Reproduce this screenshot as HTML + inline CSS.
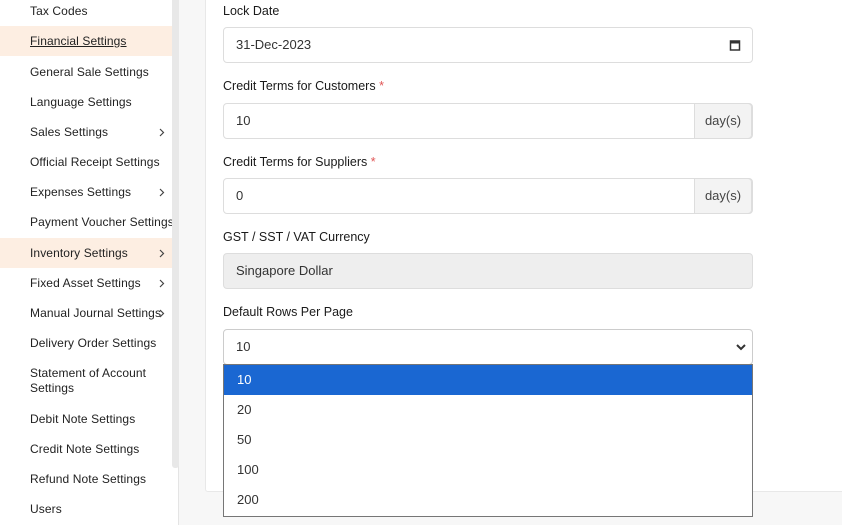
<!DOCTYPE html>
<html><head><style>
*{box-sizing:border-box;margin:0;padding:0}
body{width:842px;height:525px;overflow:hidden;background:#f7f7f7;font-family:"Liberation Sans",sans-serif;color:#222;position:relative}
.side{position:absolute;left:0;top:0;width:179px;height:525px;background:#fff;border-right:1px solid #e4e4e4}
.sb{position:absolute;left:172px;top:0;width:7px;height:468px;background:#e8e8e8;border-radius:0 0 3px 3px}
.it{position:absolute;left:0;width:172px;height:30px;font-size:12px;padding-left:30px;line-height:30px;color:#222;letter-spacing:0.1px;white-space:nowrap}
.it.h{background:#fdeee2;width:179px}
.it svg{position:absolute;left:159px;top:11px}
.card{position:absolute;left:205px;top:-5px;width:640px;height:497px;background:#fff;border:1px solid #e8e8e8;border-radius:3px}
.lbl{position:absolute;left:223px;font-size:12.5px;color:#1a1a1a}
.lbl b{color:#e05555;font-weight:normal}
.inp{position:absolute;left:223px;width:530px;height:36px;border:1px solid #ddd;border-radius:4px;background:#fff;font-size:13px;padding-left:12px;line-height:34px;color:#333}
.add{position:absolute;right:0;top:-1px;width:58px;height:36px;background:#f3f3f3;border:1px solid #ddd;border-radius:0 4px 4px 0;text-align:center;line-height:34px;font-size:13px;color:#444}
.dd{position:absolute;left:223px;top:364px;width:530px;height:153px;border:1px solid #767676;background:#fff;font-size:13px}
.dd div{height:30px;line-height:30px;padding-left:13px;color:#333}
.dd .sel{background:#1a67d2;color:#fff}
</style></head><body>
<div class="side">
<div class="it" style="top:-4px">Tax Codes</div>
<div class="it h" style="top:26px"><u>Financial Settings</u></div>
<div class="it" style="top:57px">General Sale Settings</div>
<div class="it" style="top:87px">Language Settings</div>
<div class="it" style="top:117px">Sales Settings<svg width="6" height="9" viewBox="0 0 6 9"><path d="M1 1l3.5 3.5L1 8" fill="none" stroke="#444" stroke-width="1.2"/></svg></div>
<div class="it" style="top:147px">Official Receipt Settings</div>
<div class="it" style="top:177px">Expenses Settings<svg width="6" height="9" viewBox="0 0 6 9"><path d="M1 1l3.5 3.5L1 8" fill="none" stroke="#444" stroke-width="1.2"/></svg></div>
<div class="it" style="top:207px">Payment Voucher Settings</div>
<div class="it h" style="top:238px">Inventory Settings<svg width="6" height="9" viewBox="0 0 6 9"><path d="M1 1l3.5 3.5L1 8" fill="none" stroke="#444" stroke-width="1.2"/></svg></div>
<div class="it" style="top:268px">Fixed Asset Settings<svg width="6" height="9" viewBox="0 0 6 9"><path d="M1 1l3.5 3.5L1 8" fill="none" stroke="#444" stroke-width="1.2"/></svg></div>
<div class="it" style="top:298px">Manual Journal Settings<svg width="6" height="9" viewBox="0 0 6 9"><path d="M1 1l3.5 3.5L1 8" fill="none" stroke="#444" stroke-width="1.2"/></svg></div>
<div class="it" style="top:328px">Delivery Order Settings</div>
<div class="it" style="top:366px;line-height:15px;height:32px">Statement of Account<br>Settings</div>
<div class="it" style="top:404px">Debit Note Settings</div>
<div class="it" style="top:434px">Credit Note Settings</div>
<div class="it" style="top:464px">Refund Note Settings</div>
<div class="it" style="top:494px">Users</div>
<div class="sb"></div>
</div>
<div class="card"></div>
<div class="lbl" style="top:4px">Lock Date</div>
<div class="inp" style="top:27px">31-Dec-2023<svg style="position:absolute;right:11px;top:11px" width="12" height="12" viewBox="0 0 12 12"><rect x="1.5" y="2" width="9" height="9" fill="none" stroke="#333" stroke-width="1.5"/><rect x="1.5" y="2" width="9" height="2.5" fill="#333"/></svg></div>
<div class="lbl" style="top:79px">Credit Terms for Customers <b>*</b></div>
<div class="inp" style="top:103px">10<div class="add">day(s)</div></div>
<div class="lbl" style="top:155px">Credit Terms for Suppliers <b>*</b></div>
<div class="inp" style="top:178px">0<div class="add">day(s)</div></div>
<div class="lbl" style="top:230px">GST / SST / VAT Currency</div>
<div class="inp" style="top:253px;background:#eee;color:#333">Singapore Dollar</div>
<div class="lbl" style="top:305px">Default Rows Per Page</div>
<div class="inp" style="top:329px;border-color:#ccc">10<svg style="position:absolute;right:5px;top:13px" width="12" height="8" viewBox="0 0 12 8"><path d="M2 2l4 4 4-4" fill="none" stroke="#333" stroke-width="2"/></svg></div>
<div class="dd"><div class="sel">10</div><div>20</div><div>50</div><div>100</div><div>200</div></div>
</body></html>
